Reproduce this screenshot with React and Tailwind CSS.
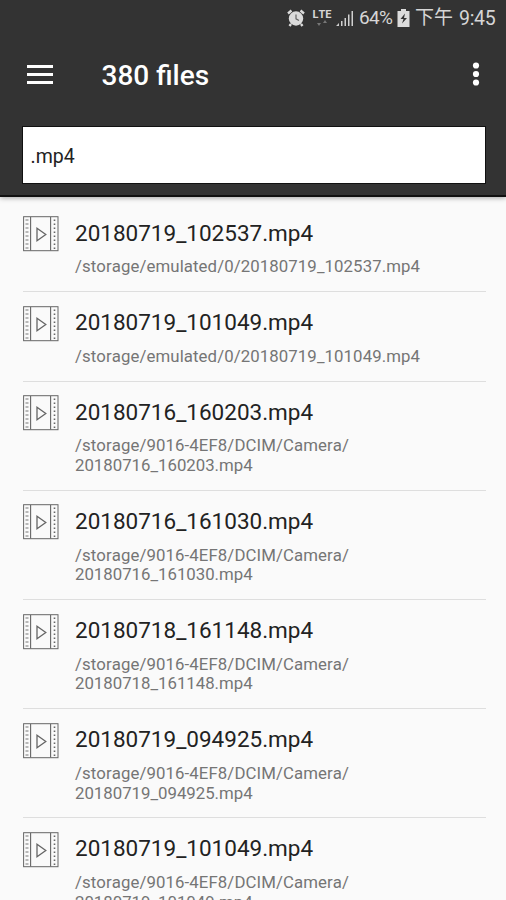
const files = [
  ['20180719_102537.mp4', '/storage/emulated/0/20180719_102537.mp4'],
  ['20180719_101049.mp4', '/storage/emulated/0/20180719_101049.mp4'],
  ['20180716_160203.mp4', '/storage/9016-4EF8/DCIM/Camera/', '20180716_160203.mp4'],
  ['20180716_161030.mp4', '/storage/9016-4EF8/DCIM/Camera/', '20180716_161030.mp4'],
  ['20180718_161148.mp4', '/storage/9016-4EF8/DCIM/Camera/', '20180718_161148.mp4'],
  ['20180719_094925.mp4', '/storage/9016-4EF8/DCIM/Camera/', '20180719_094925.mp4'],
  ['20180719_101049.mp4', '/storage/9016-4EF8/DCIM/Camera/', '20180719_101049.mp4'],
];

function FilmIcon() {
  return (
    <svg className="h-9 w-9 shrink-0" viewBox="0 0 36 36" fill="none" stroke="#666">
      <rect x="0.6" y="0.7" width="34.4" height="34" strokeWidth="1" />
      <path d="M7.600 1v33.500M27.600 1v33.500" strokeWidth="1.100" />
      <path d="M4 3.500v30" strokeWidth="3" strokeDasharray="1 3" stroke="#777" />
      <path d="M31.500 3.500v30" strokeWidth="1.600" strokeDasharray="1.400 2.600" stroke="#666" />
      <path d="M14 12.200v12.600l8.800-6.300z" strokeWidth="1.300" />
    </svg>
  );
}

function AlarmIcon() {
  return (
    <svg className="h-[18px] w-[18px]" viewBox="0 0 18 18">
      <circle cx="9" cy="9.500" r="7.200" fill="#dcdcdc" />
      <path d="M1 4.500 4.500 1.500M17 4.500 13.500 1.500M4 15l-1.500 2M14 15l1.500 2" stroke="#dcdcdc" strokeWidth="2.400" />
      <path d="M9 5.500v4.300l3 1.800" stroke="#666" strokeWidth="1.200" fill="none" />
    </svg>
  );
}

function StatusBar() {
  return (
    <div className="flex h-9 items-center pl-[287px] text-[#d6d6d6]">
      <AlarmIcon />
      <div className="ml-[7px] flex w-[20px] flex-col items-center">
        <span className="text-[11px] leading-[10px] font-bold">LTE</span>
        <svg className="h-[6px] w-[10px]" viewBox="0 0 10 6" fill="#777">
          <path d="M0 3h4L2 6zM6 3l2-3 2 3z" />
        </svg>
      </div>
      <svg className="ml-[4px] h-[18px] w-[18px]" viewBox="0 0 18 18" fill="#d0d0d0">
        <path d="M0 17l3-3v3zM5 12h1.500v5H5zM8.500 9H10v8H8.500zM12 5.500h1.500V17H12zM15.500 2H17v15h-1.500z" />
      </svg>
      <span className="ml-[5px] w-[38px] pt-px text-[19px] tracking-[-0.7px] whitespace-nowrap">64%</span>
      <svg className="h-[18px] w-[13px]" viewBox="0 0 13 18">
        <path d="M4 0h5v2h3.500v16H.5V2H4z" fill="#dcdcdc" />
        <path d="M8 4.500 3.500 10h3L5 14.500 10 9H7z" fill="#333" />
      </svg>
      <span className="ml-[5px] text-[19px] leading-6 whitespace-nowrap font-['Roboto','Noto_Sans_CJK_TC',sans-serif]">下午</span>
      <span className="ml-[6px] pt-px text-[19.500px] tracking-[-0.3px] whitespace-nowrap">9:45</span>
    </div>
  );
}

function FileRow({ name, path }) {
  return (
    <li className="flex border-b border-[#dedede] pb-[14px]">
      <div className="pt-[13.600px]">
        <FilmIcon />
      </div>
      <div className="ml-[16px]">
        <div className="mt-[16px] text-[22.500px] leading-[28px] text-[#222]">{name}</div>
        <div className="mt-[10.800px] text-[16.800px] leading-[19.700px] text-[#757575]">
          {path.map((line) => (
            <div key={line} className="first:tracking-[0.090px]">{line}</div>
          ))}
        </div>
      </div>
    </li>
  );
}

export default function App() {
  return (
    <div className="h-[900px] w-[506px] overflow-hidden bg-[#fafafa] font-['Roboto',sans-serif] [font-kerning:none]">
      <header className="h-[197px] border-b-2 border-[#111] bg-[#333] shadow-[0_1px_5px_rgba(0,0,0,0.35)]">
        <StatusBar />
        <div className="flex h-[76px] items-center pr-[25px] pl-[27px]">
          <div className="flex flex-col gap-[5px]">
            <div className="h-[3px] w-[26px] bg-white" />
            <div className="h-[3px] w-[26px] bg-white" />
            <div className="h-[3px] w-[26px] bg-white" />
          </div>
          <h1 className="ml-[48.500px] pt-[3px] text-[28px] font-medium text-white">380 files</h1>
          <svg className="ml-auto h-[24px] w-[10px]" viewBox="0 0 10 24" fill="#fff">
            <circle cx="5" cy="3.500" r="3.100" />
            <circle cx="5" cy="12" r="3.100" />
            <circle cx="5" cy="20.500" r="3.100" />
          </svg>
        </div>
        <div className="mt-[15px] ml-[23px] flex h-[56px] w-[462px] items-center bg-white pt-[3px] pl-[7.500px] text-[19.500px] text-[#222] shadow-[0_0_0_1px_#111]">
          .mp4
        </div>
      </header>
      <ul className="mr-[20px] ml-[23px] pt-[5.500px]">
        {files.map(([name, ...path], i) => (
          <FileRow key={i} name={name} path={path} />
        ))}
      </ul>
    </div>
  );
}
